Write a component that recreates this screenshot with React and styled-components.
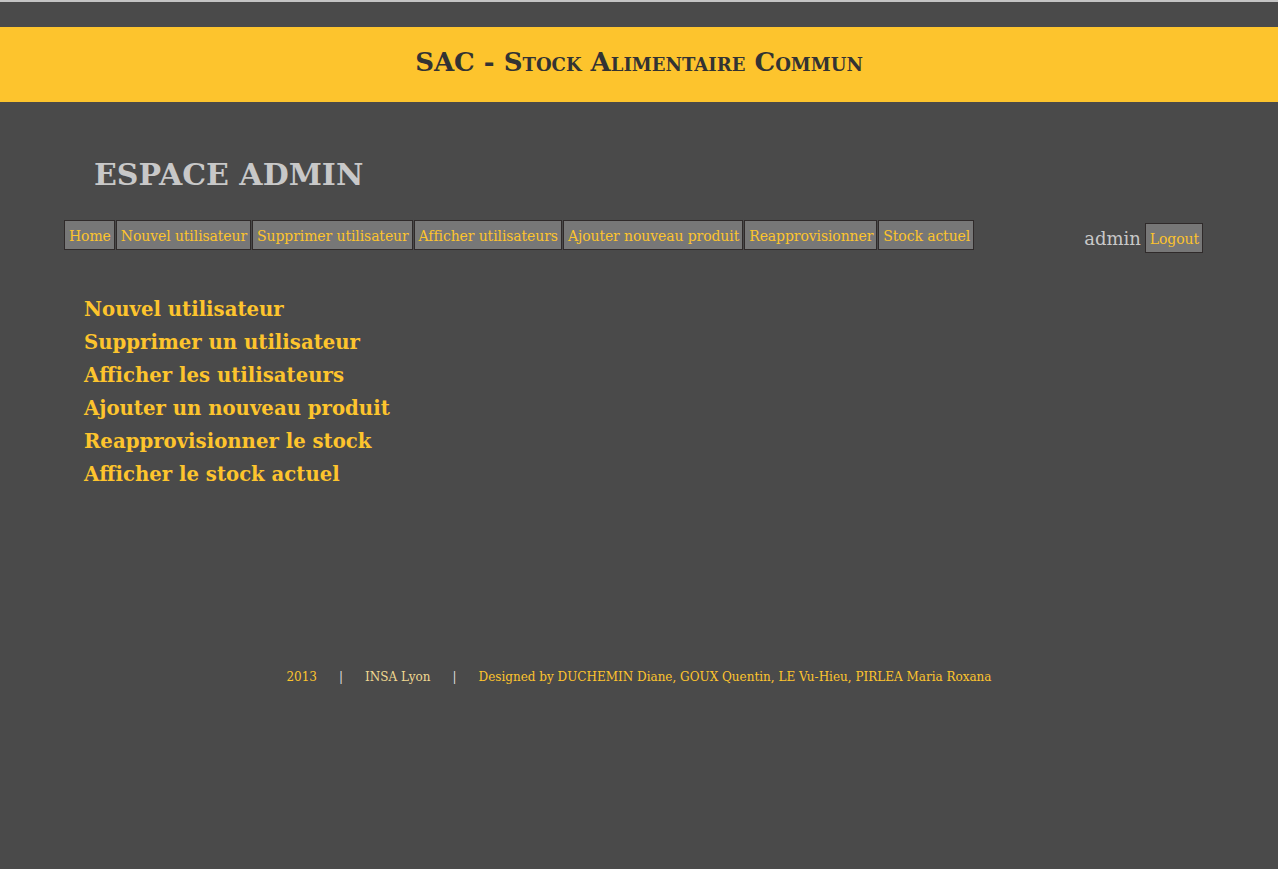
import React from 'react';
import styled, { createGlobalStyle } from 'styled-components';

const GlobalStyle = createGlobalStyle`
  html, body {
    margin: 0;
    padding: 0;
    background-color: #4a4a4a;
    font-family: "DejaVu Serif", serif;
  }
`;

const Page = styled.div`
  min-height: 869px;
  border-top: 2px solid #c4c4c4;
  box-sizing: border-box;
  padding-top: 25px;
`;

const Banner = styled.header`
  background-color: #fdc42d;
  height: 75px;
  display: flex;
  align-items: center;
  justify-content: center;
  padding-bottom: 6px;
  box-sizing: border-box;
`;

const SiteTitle = styled.h1`
  margin: 0;
  font-size: 26px;
  font-weight: bold;
  font-variant: small-caps;
  color: #333;
`;

const Main = styled.main`
  padding: 0 75px 0 64px;
`;

const SpaceTitle = styled.h2`
  margin: 55px 0 27px 30px;
  font-size: 30px;
  font-weight: bold;
  color: #c8c8c8;
  line-height: 36px;
`;

const Toolbar = styled.div`
  display: flex;
  justify-content: space-between;
  align-items: flex-start;
`;

const Nav = styled.nav`
  display: flex;
  gap: 1px;
`;

const NavButton = styled.a`
  display: block;
  background-color: #777;
  border: 1px solid #2f2a2a;
  color: #fdc42d;
  font-size: 14px;
  letter-spacing: -0.1px;
  padding: 0 3px 0 4px;
  height: 28px;
  line-height: 30px;
  text-decoration: none;
  cursor: pointer;
`;

const User = styled.div`
  display: flex;
  align-items: center;
  gap: 4px;
  margin-top: 3px;
`;

const UserName = styled.span`
  color: #c8c8c8;
  font-size: 18px;
`;

const Links = styled.ul`
  list-style: none;
  margin: 40px 0 0 20px;
  padding: 0;
`;

const LinkItem = styled.li`
  font-size: 19.7px;
  font-weight: bold;
  line-height: 33px;
  color: #fdc42d;
`;

const Footer = styled.footer`
  display: flex;
  justify-content: center;
  gap: 22px;
  margin-top: 179px;
  font-size: 12px;
  color: #fdc42d;
`;

const Sep = styled.span`
  color: #ddd;
`;

const Credit = styled.span`
  color: ${(props) => (props.light ? '#f0d890' : '#fdc42d')};
`;

const navItems = [
  'Home',
  'Nouvel utilisateur',
  'Supprimer utilisateur',
  'Afficher utilisateurs',
  'Ajouter nouveau produit',
  'Reapprovisionner',
  'Stock actuel',
];

const links = [
  'Nouvel utilisateur',
  'Supprimer un utilisateur',
  'Afficher les utilisateurs',
  'Ajouter un nouveau produit',
  'Reapprovisionner le stock',
  'Afficher le stock actuel',
];

const App = () => (
  <Page>
    <GlobalStyle />
    <Banner>
      <SiteTitle>SAC - Stock Alimentaire Commun</SiteTitle>
    </Banner>
    <Main>
      <SpaceTitle>ESPACE ADMIN</SpaceTitle>
      <Toolbar>
        <Nav>
          {navItems.map((item) => (
            <NavButton key={item}>{item}</NavButton>
          ))}
        </Nav>
        <User>
          <UserName>admin</UserName>
          <NavButton>Logout</NavButton>
        </User>
      </Toolbar>
      <Links>
        {links.map((l) => (
          <LinkItem key={l}>{l}</LinkItem>
        ))}
      </Links>
    </Main>
    <Footer>
      <Credit>2013</Credit>
      <Sep>|</Sep>
      <Credit light>INSA Lyon</Credit>
      <Sep>|</Sep>
      <Credit>Designed by DUCHEMIN Diane, GOUX Quentin, LE Vu-Hieu, PIRLEA Maria Roxana</Credit>
    </Footer>
  </Page>
);

export default App;
